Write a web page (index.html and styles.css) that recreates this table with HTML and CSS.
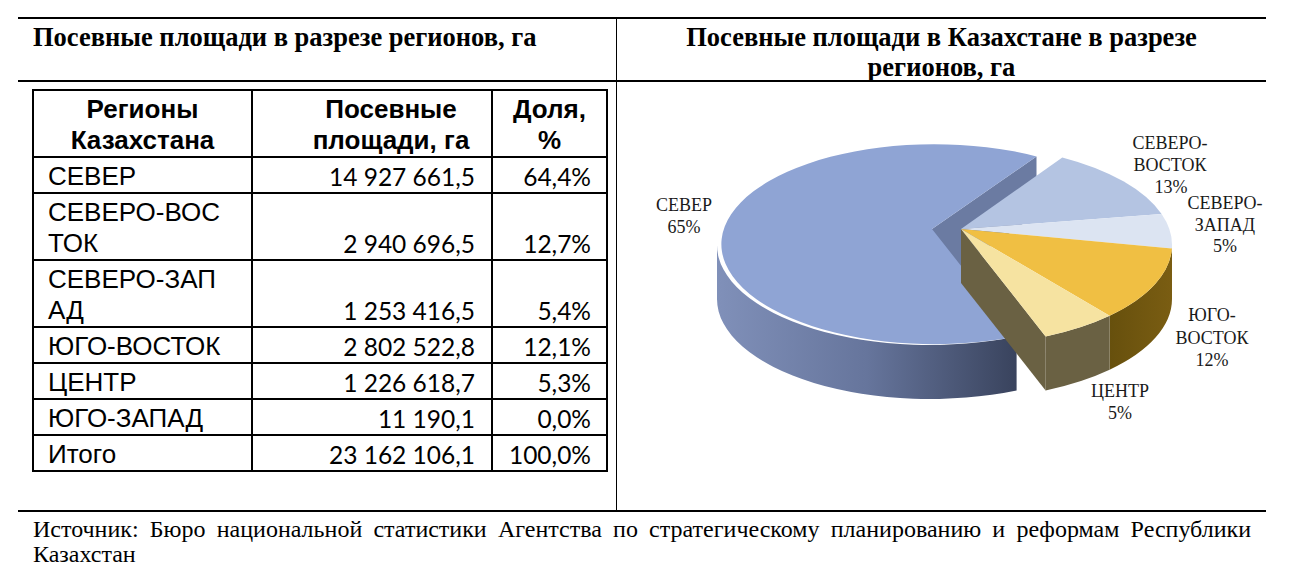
FILE: index.html
```html
<!DOCTYPE html>
<html lang="ru">
<head>
<meta charset="utf-8">
<title>Посевные площади</title>
<link rel="stylesheet" href="styles.css">
</head>
<body>
<div class="page">
  <div class="frame">
    <div class="head head-left">Посевные площади в разрезе регионов, га</div>
    <div class="head head-right">Посевные площади в Казахстане в разрезе<br>регионов, га</div>
    <div class="body body-left">
      <table class="data">
        <colgroup><col class="c1"><col class="c2"><col class="c3"></colgroup>
        <thead>
          <tr><th>Регионы<br>Казахстана</th><th class="th-area">Посевные<br>площади, га</th><th>Доля,<br>%</th></tr>
        </thead>
        <tbody>
          <tr><td>СЕВЕР</td><td class="num">14 927 661,5</td><td class="num pct">64,4%</td></tr>
          <tr><td>СЕВЕРО-ВОС<br>ТОК</td><td class="num">2 940 696,5</td><td class="num pct">12,7%</td></tr>
          <tr><td>СЕВЕРО-ЗАП<br>АД</td><td class="num">1 253 416,5</td><td class="num pct">5,4%</td></tr>
          <tr><td>ЮГО-ВОСТОК</td><td class="num">2 802 522,8</td><td class="num pct">12,1%</td></tr>
          <tr><td>ЦЕНТР</td><td class="num">1 226 618,7</td><td class="num pct">5,3%</td></tr>
          <tr><td>ЮГО-ЗАПАД</td><td class="num">11 190,1</td><td class="num pct">0,0%</td></tr>
          <tr><td>Итого</td><td class="num">23 162 106,1</td><td class="num pct">100,0%</td></tr>
        </tbody>
      </table>
    </div>
    <div class="body body-right">
      <svg class="chart" width="649" height="428" viewBox="617 82 649 428" xmlns="http://www.w3.org/2000/svg">
        <defs>
          <linearGradient id="sideN" gradientUnits="userSpaceOnUse" x1="717" y1="0" x2="1017" y2="0">
            <stop offset="0" stop-color="#8090b9"/>
            <stop offset="0.5" stop-color="#66759c"/>
            <stop offset="1" stop-color="#39435d"/>
          </linearGradient>
          <linearGradient id="sideG" gradientUnits="userSpaceOnUse" x1="1110" y1="0" x2="1172" y2="0">
            <stop offset="0" stop-color="#67500d"/>
            <stop offset="1" stop-color="#7a5d12"/>
          </linearGradient>
        </defs>
        <!-- СЕВЕР -->
        <path d="M932,229 L1036.5,156.4 L1036.5,214.4 L932,287 Z" fill="#6b7ba2"/>
        <path d="M717,245 A213,100 0 0 0 1016.6,336.4 L1016.6,390.4 A213,100 0 0 1 717,299 Z" fill="url(#sideN)"/>
        <path d="M932,229 L1036.5,156.4 A213,100 0 1 0 1016.6,336.4 Z" fill="#8fa4d4"/>
        <!-- group -->
        <path d="M961,229 L1045.6,336.4 L1045.6,390.4 L961,283 Z" fill="#6a6143"/>
        <path d="M1172,245 A213,100 0 0 1 1109.6,315.7 L1109.6,369.7 A213,100 0 0 0 1172,299 Z" fill="url(#sideG)"/>
        <path d="M1109.6,315.7 A213,100 0 0 1 1045.6,336.4 L1045.6,390.4 A213,100 0 0 0 1109.6,369.7 Z" fill="#6a6143"/>
        <path d="M961,229 L1062.3,157.5 A213,100 0 0 1 1161.6,214.1 Z" fill="#b4c4e2"/>
        <path d="M961,229 L1161.6,214.1 A213,100 0 0 1 1171.9,248.5 Z" fill="#dce4f2"/>
        <path d="M961,229 L1171.9,248.5 A213,100 0 0 1 1109.6,315.7 Z" fill="#f0bf43"/>
        <path d="M961,229 L1109.6,315.7 A213,100 0 0 1 1045.6,336.4 Z" fill="#f6e3a1"/>
        <g class="lbl">
          <text x="684" y="211">СЕВЕР</text>
          <text x="684" y="233">65%</text>
          <text x="1170" y="149">СЕВЕРО-</text>
          <text x="1170" y="171">ВОСТОК</text>
          <text x="1171" y="193">13%</text>
          <text x="1225" y="209">СЕВЕРО-</text>
          <text x="1225" y="231">ЗАПАД</text>
          <text x="1225" y="252">5%</text>
          <text x="1212" y="321">ЮГО-</text>
          <text x="1212" y="344">ВОСТОК</text>
          <text x="1212" y="366">12%</text>
          <text x="1120" y="397">ЦЕНТР</text>
          <text x="1120" y="419">5%</text>
        </g>
      </svg>
    </div>
  </div>
  <div class="source">
    <div class="src-line">Источник: Бюро национальной статистики Агентства по стратегическому планированию и реформам Республики</div>
    <div>Казахстан</div>
  </div>
</div>
</body>
</html>
```
FILE: styles.css
```css
html, body {
  margin: 0;
  padding: 0;
  background: #ffffff;
}

.page {
  padding: 17px 0 0 18px;
  width: 1248px;
  color: #000;
}

.frame {
  display: grid;
  grid-template-columns: 598px 650px;
  border-top: 2px solid #000;
  border-bottom: 2px solid #000;
}

.head {
  box-sizing: border-box;
  height: 63px;
  padding-top: 3px;
  border-bottom: 2px solid #000;
  font-family: "Liberation Serif", "Times New Roman", serif;
  font-weight: bold;
  font-size: 26.5px;
  line-height: 30px;
}

.head-left {
  padding-left: 15px;
}

.head-right {
  border-left: 1px solid #000;
  text-align: center;
}

.body {
  box-sizing: border-box;
  height: 428px;
}

.body-left {
  padding: 7px 0 0 14px;
}

.body-right {
  border-left: 1px solid #000;
}

.chart {
  display: block;
}

.lbl text {
  font-family: "Liberation Serif", "Times New Roman", serif;
  font-size: 18px;
  fill: #1a1a1a;
  text-anchor: middle;
}

.data {
  border-collapse: collapse;
  table-layout: fixed;
  width: 574px;
  font-family: "Liberation Sans", Arial, sans-serif;
  font-size: 26px;
  line-height: 31px;
}

.c1 { width: 219px; }
.c2 { width: 240px; }
.c3 { width: 115px; }

.data th,
.data td {
  border: 2px solid #000;
  padding: 3px 14px 0;
  vertical-align: bottom;
}

.data th {
  font-weight: bold;
  text-align: center;
  vertical-align: middle;
  padding: 3px 6px 0;
}

.data th.th-area {
  padding-left: 44px;
  padding-right: 6px;
}

.data td {
  text-align: left;
  white-space: nowrap;
}

.data td.num {
  font-family: Lato, "Noto Sans", sans-serif;
  font-size: 24.5px;
  text-align: right;
  padding-right: 16px;
}

.data td.pct {
  padding-right: 15px;
}

.source {
  box-sizing: border-box;
  width: 1248px;
  padding: 5px 15px 0;
  font-family: "Liberation Serif", "Times New Roman", serif;
  font-size: 24px;
  line-height: 25px;
}

.src-line {
  text-align: justify;
  text-align-last: justify;
}
```
